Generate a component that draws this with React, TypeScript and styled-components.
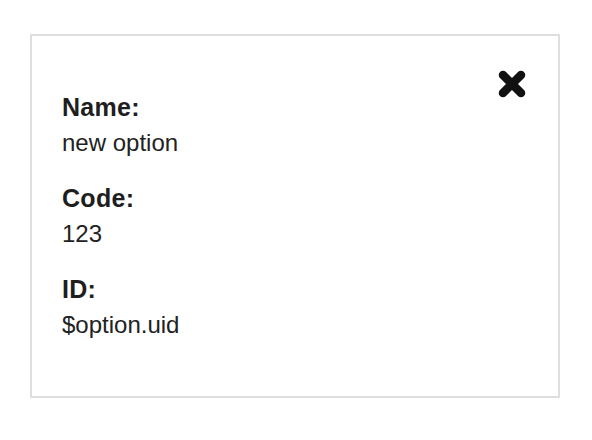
import styled, { createGlobalStyle } from 'styled-components';

const GlobalStyle = createGlobalStyle`
  html, body {
    margin: 0;
    padding: 0;
    background: #ffffff;
  }
  body {
    font-family: "Liberation Sans", Arial, sans-serif;
    color: #222222;
  }
`;

const Page = styled.div`
  padding: 34px 0 0 30px;
`;

const Card = styled.div`
  position: relative;
  box-sizing: border-box;
  width: 530px;
  height: 364px;
  border: 2px solid #dedede;
  padding: 54px 30px 0 30px;
`;

const CloseButton = styled.button`
  position: absolute;
  top: 31px;
  right: 29px;
  width: 34px;
  height: 34px;
  padding: 0;
  border: 0;
  background: transparent;
  cursor: pointer;
  display: flex;
  align-items: center;
  justify-content: center;
`;

const Field = styled.div`
  margin-bottom: 21px;
`;

const Label = styled.div`
  font-weight: 700;
  font-size: 25px;
  line-height: 35px;
  letter-spacing: 0.3px;
  color: #1e1e1e;
`;

const Value = styled.div`
  font-size: 24px;
  line-height: 35px;
  color: #222222;
`;

const CloseIcon = () => (
  <svg width="34" height="34" viewBox="0 0 34 34">
    <path
      d="M8 8 L26 26 M26 8 L8 26"
      stroke="#111"
      strokeWidth="8.5"
      strokeLinecap="round"
      fill="none"
    />
  </svg>
);

const fields = [
  { label: 'Name:', value: 'new option' },
  { label: 'Code:', value: '123' },
  { label: 'ID:', value: '$option.uid' },
];

export default function App() {
  return (
    <>
      <GlobalStyle />
      <Page>
        <Card>
          <CloseButton aria-label="Close">
            <CloseIcon />
          </CloseButton>
          {fields.map((f) => (
            <Field key={f.label}>
              <Label>{f.label}</Label>
              <Value>{f.value}</Value>
            </Field>
          ))}
        </Card>
      </Page>
    </>
  );
}
